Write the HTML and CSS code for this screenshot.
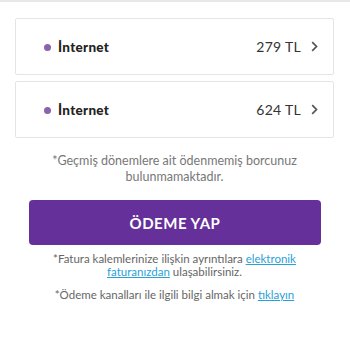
FILE: index.html
```html
<!DOCTYPE html>
<html lang="tr">
<head>
<meta charset="utf-8">
<link rel="stylesheet" href="styles.css">
</head>
<body>
<div class="topline"></div>
<main class="page">
  <div class="cards">
    <div class="card">
      <span class="dot"></span>
      <span class="name">İnternet</span>
      <span class="amount">279 TL</span>
      <svg class="chev" width="7" height="11" viewBox="0 0 7 11"><path d="M1.2 1.2 L5.5 5.5 L1.2 9.8" fill="none" stroke="#555" stroke-width="1.7"/></svg>
    </div>
    <div class="card">
      <span class="dot"></span>
      <span class="name">İnternet</span>
      <span class="amount">624 TL</span>
      <svg class="chev" width="7" height="11" viewBox="0 0 7 11"><path d="M1.2 1.2 L5.5 5.5 L1.2 9.8" fill="none" stroke="#555" stroke-width="1.7"/></svg>
    </div>
  </div>
  <p class="note">*Geçmiş dönemlere ait ödenmemiş borcunuz<br>bulunmamaktadır.</p>
  <button class="pay">ÖDEME YAP</button>
  <p class="info">*Fatura kalemlerinize ilişkin ayrıntılara <a href="#">elektronik</a><br><a href="#">faturanızdan</a> ulaşabilirsiniz.</p>
  <p class="info second">*Ödeme kanalları ile ilgili bilgi almak için <a href="#">tıklayın</a></p>
</main>
</body>
</html>
```
FILE: styles.css
```css
html, body {
  margin: 0;
  padding: 0;
  background: #ffffff;
  font-family: Lato, "Noto Sans", sans-serif;
}
.topline {
  height: 2px;
  background: #e8e8e8;
}
.page {
  padding: 16px 16px 0 15px;
}
.cards {
  display: flex;
  flex-direction: column;
  gap: 6px;
}
.card {
  display: flex;
  align-items: center;
  height: 55px;
  border: 1px solid #e4e4e4;
  border-radius: 2px;
  padding: 0 15px 0 28px;
}
.dot {
  width: 7px;
  height: 7px;
  border-radius: 50%;
  background: #8b62ad;
  margin-right: 7px;
  margin-top: 2px;
}
.name {
  font-weight: 900;
  font-size: 13.5px;
  color: #222;
  letter-spacing: 0.3px;
  flex: 1;
}
.amount {
  font-size: 14px;
  color: #333;
  letter-spacing: 0.3px;
  margin-right: 10px;
}
.chev {
  display: block;
}
.note {
  margin: 15px 0 0 0;
  text-align: center;
  color: #777;
  font-size: 12.5px;
  line-height: 16px;
}
.pay {
  display: block;
  width: 292px;
  height: 45px;
  margin: 15px 0 0 14px;
  border: none;
  border-radius: 4px;
  background: #66309a;
  color: #fff;
  font-family: Lato, "Noto Sans", sans-serif;
  font-weight: 700;
  font-size: 15px;
  letter-spacing: 0.5px;
}
.info {
  margin: 8px 0 0 0;
  text-align: center;
  color: #666;
  font-size: 11.5px;
  line-height: 12.5px;
}
.info.second {
  margin-top: 11px;
}
.info a {
  color: #2a9fd8;
  text-decoration: underline;
}
```
